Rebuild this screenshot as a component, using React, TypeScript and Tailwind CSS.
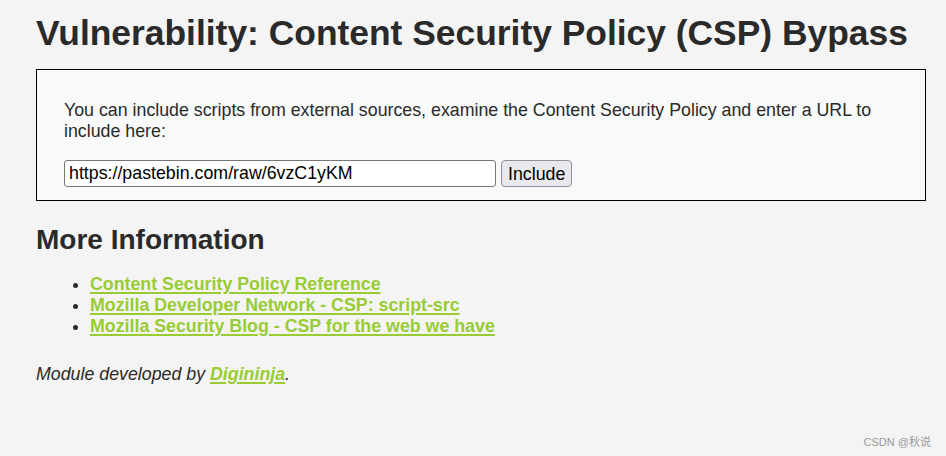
import React from "react";

const links = [
  "Content Security Policy Reference",
  "Mozilla Developer Network - CSP: script-src",
  "Mozilla Security Blog - CSP for the web we have",
];

export default function App() {
  return (
    <div
      className="relative min-h-[456px] bg-[#f4f4f4] text-[#2a2a2a] pl-[36px] pr-[20px] pt-[13px]"
      style={{ fontFamily: '"Liberation Sans", Arial, sans-serif' }}
    >
      <h1 className="text-[35.4px] font-bold leading-[40px] whitespace-nowrap">
        Vulnerability: Content Security Policy (CSP) Bypass
      </h1>

      <div className="mt-[16px] w-[890px] border border-black bg-[#f8f9f9] pl-[27px] pt-[30px] pb-[13px]">
        <p className="text-[17.8px] leading-[21px] pr-[10px]">
          You can include scripts from external sources, examine the Content Security Policy and enter a URL to
          include here:
        </p>
        <div className="mt-[18px] flex items-center gap-[5px]">
          <input
            type="text"
            defaultValue="https://pastebin.com/raw/6vzC1yKM"
            className="h-[27px] w-[432px] rounded-[3px] border border-[#767676] bg-white px-[4px] text-[17.8px] text-black outline-none"
          />
          <button className="h-[27px] rounded-[4px] border border-[#8f8f9d] bg-[#e9e9ed] px-[6px] text-[17.8px] text-black">
            Include
          </button>
        </div>
      </div>

      <h2 className="mt-[23px] text-[28px] font-bold leading-[32px]">More Information</h2>

      <ul className="mt-[18px] list-disc pl-[54px] text-[17.8px] font-bold leading-[21px]">
        {links.map((l) => (
          <li key={l}>
            <a href="#" className="text-[#99cc33] underline decoration-2 underline-offset-[2px]">
              {l}
            </a>
          </li>
        ))}
      </ul>

      <p className="mt-[27px] text-[17.8px] italic leading-[21px]">
        Module developed by{" "}
        <a href="#" className="font-bold text-[#99cc33] underline decoration-2 underline-offset-[2px]">
          Digininja
        </a>
        .
      </p>

      <div
        className="absolute bottom-[6px] right-[15px] text-[11px] text-[#999]"
        style={{ fontFamily: '"Liberation Sans", "Noto Sans CJK SC", sans-serif' }}
      >
        CSDN @秋说
      </div>
    </div>
  );
}
